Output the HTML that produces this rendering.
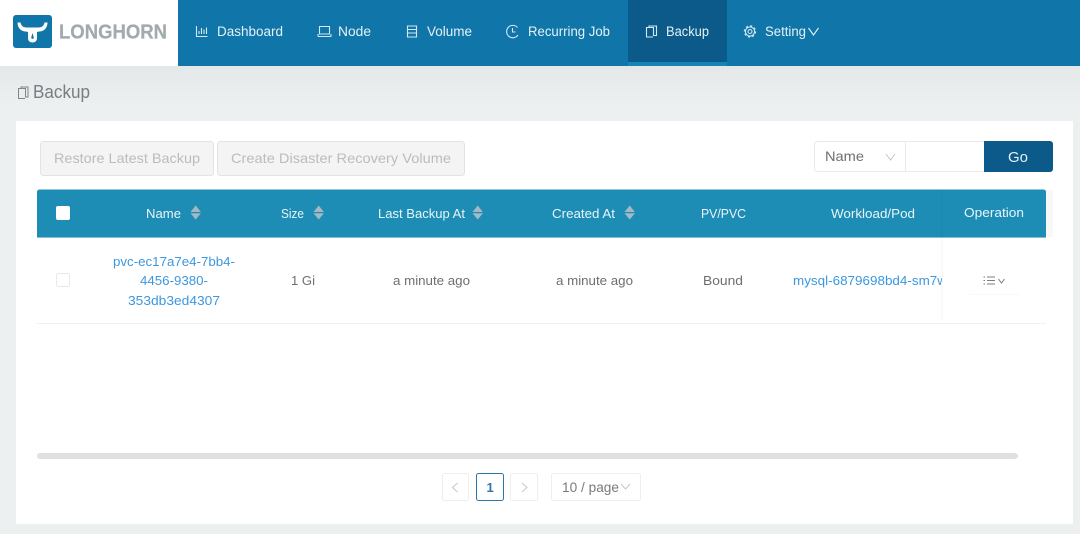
<!DOCTYPE html>
<html><head><meta charset="utf-8"><style>
html,body{margin:0;padding:0;width:1080px;height:534px;overflow:hidden;background:#ecf0f1}
svg{display:block;filter:blur(.3px)}
text{font-family:"Liberation Sans",sans-serif;white-space:pre}
.n{font-size:13.5px;fill:#e4f1f7}
.h{font-size:12.5px;fill:#e8f4f8}
.c{font-size:12.5px;fill:#6f6f6f}
.l{font-size:12.5px;fill:#3b98e0}
.ic{fill:none;stroke:#d5e8f1;stroke-width:1.1}
</style></head><body>
<svg width="1080" height="534" viewBox="0 0 1080 534" xmlns="http://www.w3.org/2000/svg">
<defs>
<linearGradient id="bg" x1="0" y1="0" x2="0" y2="1"><stop offset="0" stop-color="#e4e8e9"/><stop offset="1" stop-color="#ecf0f1"/></linearGradient>
<linearGradient id="sh" x1="0" y1="0" x2="1" y2="0"><stop offset="0" stop-color="#000" stop-opacity="0"/><stop offset="1" stop-color="#000" stop-opacity=".02"/></linearGradient>
<clipPath id="cp"><rect x="780" y="260" width="162" height="40"/></clipPath>
</defs>
<rect width="1080" height="534" fill="#ecf0f1"/>
<rect y="66" width="1080" height="40" fill="url(#bg)"/>

<!-- header -->
<rect width="179" height="66" fill="#fff"/>
<rect x="178" width="902" height="66" fill="#1075a8"/>
<rect x="628" width="99" height="62" fill="#0b5a8a"/>
<rect x="628" y="62" width="99" height="4" fill="#1585b5"/>

<!-- logo -->
<rect x="13" y="15" width="39" height="33" rx="3" fill="#1075a8"/>
<path d="M17.500 22.500 L20.500 22.500 C21 25.500 23 27.500 26.500 27.500 L38.500 27.500 C42 27.500 44 25.500 44.500 22.500 L47.500 22.500 C47.500 27.500 44.500 31.500 39 31.500 L37 32 L37 38 C37 41 35 42.500 32.500 42.500 C30 42.500 28 41 28 38 L28 32 L26 31.500 C20.500 31.500 17.500 27.500 17.500 22.500 Z" fill="#fff"/>
<path d="M32.500 33 L31.200 37.500 C31.200 39.300 33.800 39.300 33.800 37.500 Z" fill="#1075a8"/>
<text x="59" y="38.500" font-size="20" font-weight="700" fill="#a1aaae" stroke="#a1aaae" stroke-width=".25" textLength="108" lengthAdjust="spacingAndGlyphs">LONGHORN</text>

<!-- nav icons -->
<g class="ic">
<path d="M196.500 26 V36.500 H207.500 M199 34 V31 M201.500 34 V28 M204 34 V29.500 M206.500 34 V27.500"/>
<path d="M319.500 26.500 H329.500 V34 H319.500 Z M318 36.500 H331 M318 34 V36.500 M331 34 V36.500"/>
<path d="M407.500 26 H416.500 V37 H407.500 Z M407.500 29.500 H416.500 M407.500 33 H416.500"/>
<path d="M517.500 27.500 A6.200 6.200 0 1 0 518 35 M512.500 28 V32 H515.500"/>
<path d="M649 27.500 H646.500 V37 H653 M649 28 V26 H656.500 V35.500 H653.500 V27.500 H649" />
<circle cx="750" cy="31.500" r="2"/>
<circle cx="750" cy="31.500" r="4.600"/>
<circle cx="750" cy="31.500" r="5.600" stroke-width="1.200" stroke-dasharray="2 2.400"/>
<path d="M808.500 28 L813.500 35 L818.500 28" stroke="#e4f1f7"/>
</g>
<text class="n" x="217" y="36" textLength="66" lengthAdjust="spacingAndGlyphs">Dashboard</text>
<text class="n" x="338" y="36" textLength="33" lengthAdjust="spacingAndGlyphs">Node</text>
<text class="n" x="427" y="36" textLength="45" lengthAdjust="spacingAndGlyphs">Volume</text>
<text class="n" x="528" y="36" textLength="82" lengthAdjust="spacingAndGlyphs">Recurring Job</text>
<text class="n" x="666" y="36" textLength="43" lengthAdjust="spacingAndGlyphs">Backup</text>
<text class="n" x="765" y="36" textLength="41" lengthAdjust="spacingAndGlyphs">Setting</text>

<!-- page title -->
<path d="M21 88.500 H18.500 V98.500 H25 M21 89 V87 H28 V97 H25.500 V88.500 H21" fill="none" stroke="#80878b" stroke-width="1"/>
<text x="33" y="98" font-size="18" fill="#777d81" textLength="57" lengthAdjust="spacingAndGlyphs">Backup</text>

<!-- card -->
<rect x="16" y="121" width="1057" height="403" fill="#fff"/>

<!-- toolbar -->
<rect x="40.500" y="141.500" width="173" height="34" rx="3" fill="#f4f4f4" stroke="#e3e3e3"/>
<rect x="217.500" y="141.500" width="247" height="34" rx="3" fill="#f4f4f4" stroke="#e3e3e3"/>
<text x="54" y="163" font-size="14" fill="#bcbcbc" textLength="146" lengthAdjust="spacingAndGlyphs">Restore Latest Backup</text>
<text x="231" y="163" font-size="14" fill="#bcbcbc" textLength="220" lengthAdjust="spacingAndGlyphs">Create Disaster Recovery Volume</text>

<rect x="814.500" y="141.500" width="238" height="30" rx="3" fill="#fff" stroke="#ebebeb"/>
<line x1="905.500" y1="142" x2="905.500" y2="171" stroke="#ebebeb"/>
<text x="825" y="161" font-size="14" fill="#707070" textLength="39" lengthAdjust="spacingAndGlyphs">Name</text>
<path d="M886 154 L890.500 160 L895 154" fill="none" stroke="#c4c4c4"/>
<path d="M984 141 H1050 A3 3 0 0 1 1053 144 V169 A3 3 0 0 1 1050 172 H984 Z" fill="#0b5a8a"/>
<text x="1008" y="162" font-size="15" fill="#e6f0f5" textLength="20" lengthAdjust="spacingAndGlyphs">Go</text>

<!-- table header -->
<rect x="1046" y="190" width="7" height="47" fill="#f8f8f8"/>
<path d="M37 192 A2.500 2.500 0 0 1 39.500 189.500 H1043.500 A2.500 2.500 0 0 1 1046 192 V237.500 H37 Z" fill="#1e8db6"/>
<rect x="37" y="237" width="1009" height="1" fill="#7fbfd8"/>
<rect x="934" y="190" width="8" height="47" fill="url(#sh)"/>
<rect x="942" y="190" width="1" height="47" fill="#1c88b0"/>

<rect x="56" y="206" width="14" height="14" rx="2" fill="#fff"/>

<text class="h" x="146" y="218" textLength="35" lengthAdjust="spacingAndGlyphs">Name</text>
<text class="h" x="281" y="218" textLength="23" lengthAdjust="spacingAndGlyphs">Size</text>
<text class="h" x="378" y="218" textLength="87" lengthAdjust="spacingAndGlyphs">Last Backup At</text>
<text class="h" x="552" y="218" textLength="63" lengthAdjust="spacingAndGlyphs">Created At</text>
<text class="h" x="701" y="218" textLength="45" lengthAdjust="spacingAndGlyphs">PV/PVC</text>
<text class="h" x="831" y="218" textLength="84" lengthAdjust="spacingAndGlyphs">Workload/Pod</text>
<text class="h" x="964" y="217" textLength="60" lengthAdjust="spacingAndGlyphs">Operation</text>

<g fill="#a3b8c2">
<path d="M190.500 212 L195.700 205.500 L200.900 212 Z M190.500 213.200 H200.900 L195.700 219.500 Z"/>
<path d="M313.500 212 L318.700 205.500 L323.900 212 Z M313.500 213.200 H323.900 L318.700 219.500 Z"/>
<path d="M472.500 212 L477.700 205.500 L482.900 212 Z M472.500 213.200 H482.900 L477.700 219.500 Z"/>
<path d="M624.500 212 L629.700 205.500 L634.900 212 Z M624.500 213.200 H634.900 L629.700 219.500 Z"/>
</g>

<!-- row -->
<rect x="37" y="323" width="1009" height="1" fill="#eef0f1"/>
<rect x="56.500" y="273.500" width="13" height="13" rx="2" fill="#fff" stroke="#e8e8e8"/>
<text class="l" x="113" y="266" textLength="122" lengthAdjust="spacingAndGlyphs">pvc-ec17a7e4-7bb4-</text>
<text class="l" x="140" y="285" textLength="68" lengthAdjust="spacingAndGlyphs">4456-9380-</text>
<text class="l" x="128" y="305" textLength="92" lengthAdjust="spacingAndGlyphs">353db3ed4307</text>
<text class="c" x="291" y="285" textLength="24" lengthAdjust="spacingAndGlyphs">1 Gi</text>
<text class="c" x="393" y="285" textLength="77" lengthAdjust="spacingAndGlyphs">a minute ago</text>
<text class="c" x="556" y="285" textLength="77" lengthAdjust="spacingAndGlyphs">a minute ago</text>
<text class="c" x="703" y="285" textLength="40" lengthAdjust="spacingAndGlyphs">Bound</text>
<g clip-path="url(#cp)"><text class="l" x="793" y="285" textLength="154" lengthAdjust="spacingAndGlyphs">mysql-6879698bd4-sm7w</text></g>

<rect x="942" y="238" width="1" height="82" fill="#f6f7f7"/>
<rect x="936" y="238" width="6" height="82" fill="url(#sh)" opacity=".5"/>
<path d="M983.500 277 H985 M983.500 280.500 H985 M983.500 284 H985 M987 277 H995 M987 280.500 H995 M987 284 H995" fill="none" stroke="#7c7c7c"/>
<path d="M998.500 279 L1001.500 283 L1004.500 279" fill="none" stroke="#7c7c7c"/>
<rect x="970" y="294" width="50" height="1" fill="#f8f8f8"/>

<!-- scrollbar -->
<rect x="37" y="453" width="981" height="6" rx="3" fill="#e0e0e0"/>

<!-- pagination -->
<rect x="442.500" y="473.500" width="26" height="27" rx="2" fill="#fff" stroke="#eeeeee"/>
<path d="M457.500 483 L452.500 487.500 L457.500 492" fill="none" stroke="#c6c6c6"/>
<rect x="476.500" y="473.500" width="27" height="27" rx="2" fill="#fff" stroke="#2f77a6"/>
<text x="486.500" y="492" font-size="13" font-weight="700" fill="#2f77a6" textLength="7">1</text>
<rect x="510.500" y="473.500" width="27" height="27" rx="2" fill="#fff" stroke="#eeeeee"/>
<path d="M522 483 L527 487.500 L522 492" fill="none" stroke="#c6c6c6"/>
<rect x="551.500" y="473.500" width="89" height="27" rx="2" fill="#fff" stroke="#eeeeee"/>
<text x="562" y="492" font-size="13.500" fill="#7a7a7a" textLength="57" lengthAdjust="spacingAndGlyphs">10 / page</text>
<path d="M621 484 L625.500 489 L630 484" fill="none" stroke="#c6c6c6"/>
</svg>
</body></html>
